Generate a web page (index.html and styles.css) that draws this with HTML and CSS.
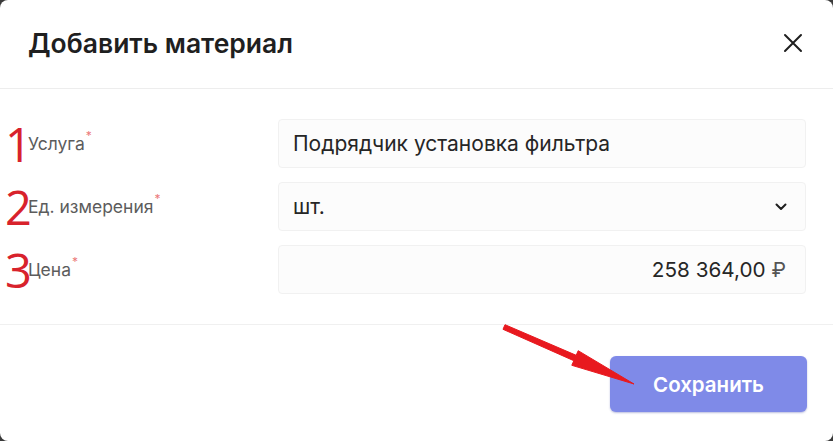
FILE: index.html
```html
<!DOCTYPE html>
<html lang="ru">
<head>
<meta charset="utf-8">
<link rel="stylesheet" href="styles.css">
</head>
<body>
<div class="modal">
  <div class="modal-header">
    <h1 class="modal-title">Добавить материал</h1>
    <button class="close-btn" aria-label="Закрыть">
      <svg width="20" height="20" viewBox="0 0 20 20"><path d="M2 2 L18 18 M18 2 L2 18" stroke="#1f1f1f" stroke-width="2" stroke-linecap="round"/></svg>
    </button>
  </div>
  <div class="modal-body">
    <div class="form-row">
      <label class="field-label">Услуга<span class="req">*</span></label>
      <div class="field-input">Подрядчик установка фильтра</div>
      <span class="anno">1</span>
    </div>
    <div class="form-row">
      <label class="field-label">Ед. измерения<span class="req">*</span></label>
      <div class="field-input select">
        <span>шт.</span>
        <svg class="chevron" width="12" height="8" viewBox="0 0 12 8"><path d="M1.5 1.5 L6 6 L10.5 1.5" fill="none" stroke="#1f1f1f" stroke-width="2" stroke-linecap="round" stroke-linejoin="round"/></svg>
      </div>
      <span class="anno">2</span>
    </div>
    <div class="form-row">
      <label class="field-label">Цена<span class="req">*</span></label>
      <div class="field-input price">258 364,00 <span class="rub">₽</span></div>
      <span class="anno">3</span>
    </div>
  </div>
  <div class="modal-footer">
    <button class="save-btn">Сохранить</button>
  </div>
  <svg class="arrow" width="833" height="441" viewBox="0 0 833 441">
    <polygon points="505,324.7 576.2,355.3 578.2,350.7 634,384 571.8,365.3 573.8,360.7 503,329.3" fill="#e8191f" stroke="#e8191f" stroke-width="1" stroke-linejoin="round"/>
  </svg>
</div>
</body>
</html>
```
FILE: styles.css
```css
* { box-sizing: border-box; }
html, body { margin: 0; padding: 0; }
body {
  background: #3a3a3a;
  font-family: Inter, "Noto Sans", "Liberation Sans", sans-serif;
  width: 833px;
  height: 441px;
  overflow: hidden;
}
.modal {
  position: relative;
  width: 833px;
  height: 441px;
  background: #fff;
  border-radius: 8px;
  display: flex;
  flex-direction: column;
}
.modal-header {
  height: 89px;
  display: flex;
  align-items: center;
  justify-content: space-between;
  padding: 0 30px 3px 28px;
  border-bottom: 1px solid #ededed;
}
.modal-title {
  margin: 0;
  font-size: 26.5px;
  font-weight: 600;
  color: #1f1f1f;
}
.close-btn {
  background: none;
  border: 0;
  padding: 0;
  width: 20px;
  height: 20px;
  display: flex;
}
.modal-body {
  padding: 30px 27px 30px 28px;
  display: flex;
  flex-direction: column;
  gap: 14px;
  border-bottom: 1px solid #f0f0f0;
}
.form-row {
  position: relative;
  display: grid;
  grid-template-columns: 250px 1fr;
  align-items: center;
}
.field-label {
  font-size: 17.5px;
  color: #5c5c5c;
  display: flex;
  align-items: flex-start;
}
.req {
  color: #ec7a7a;
  font-size: 12px;
  margin-left: 1px;
  margin-top: -5px;
}
.field-input {
  height: 49px;
  background: #fcfcfc;
  border: 1px solid #f1f1f1;
  border-radius: 4px;
  padding: 0 16px 0 14px;
  display: flex;
  align-items: center;
  font-size: 21px;
  color: #262626;
}
.field-input.select {
  justify-content: space-between;
  padding-right: 18px;
}
.field-input.price {
  justify-content: flex-end;
  gap: 6px;
  padding-right: 19px;
  font-size: 20.7px;
}
.rub { color: #555; }
.anno {
  position: absolute;
  left: -23px;
  top: 50%;
  transform: translateY(-50%);
  font-family: "Open Sans", "Liberation Sans", sans-serif;
  font-weight: 400;
  font-size: 47px;
  line-height: 1;
  color: #d8222c;
}
.modal-footer {
  flex: 1;
  display: flex;
  justify-content: flex-end;
  align-items: flex-start;
  padding: 31px 26px 0 0;
}
.save-btn {
  width: 197px;
  height: 56px;
  border: 0;
  border-radius: 6px;
  background: #7f8ae8;
  box-shadow: 0 1px 2px rgba(60, 70, 160, 0.35);
  color: #fff;
  font-family: Inter, "Noto Sans", "Liberation Sans", sans-serif;
  font-size: 20.5px;
  font-weight: 600;
}
.arrow {
  position: absolute;
  left: 0;
  top: 0;
  pointer-events: none;
}
```
